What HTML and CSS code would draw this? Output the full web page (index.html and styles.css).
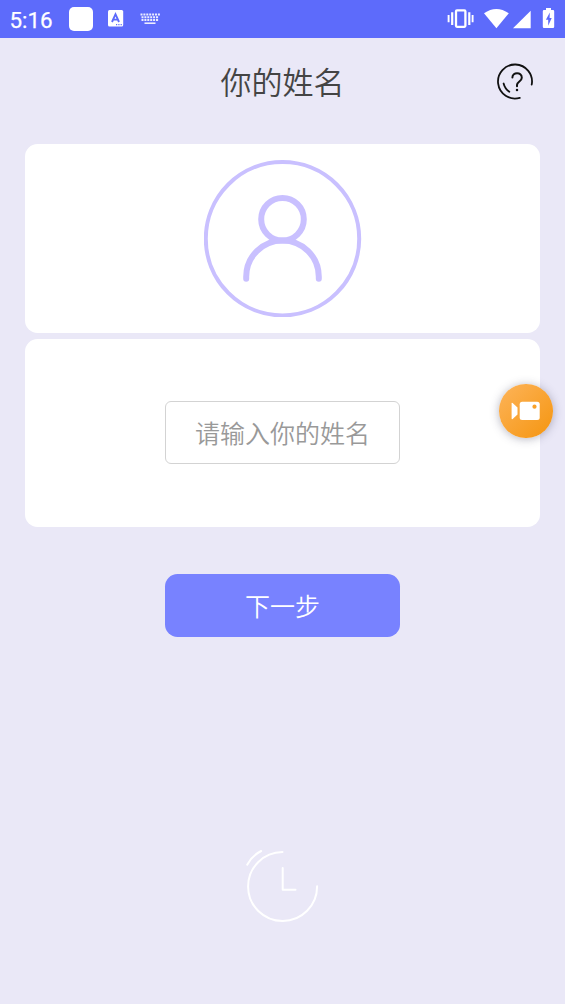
FILE: index.html
```html
<!DOCTYPE html>
<html lang="zh-CN">
<head>
<meta charset="utf-8">
<meta name="viewport" content="width=device-width, initial-scale=1">
<title>你的姓名</title>
<link rel="stylesheet" href="styles.css">
</head>
<body>
<div class="screen">
  <div class="status">
    <span class="time">5:16</span>
    <span class="app-dot"></span>
    <svg class="ic-a" width="16" height="17" viewBox="0 0 16 17">
      <rect width="15.2" height="16.6" rx="1.5" fill="#fff"/>
      <path d="M4 12L7.5 4.2L11 12M5.2 9.6H9.8" fill="none" stroke="#5d6bfb" stroke-width="1.9"/>
      <path d="M8 14.7h1.2M10.3 14.7h1.2M12.6 14.7h1.2" stroke="#5d6bfb" stroke-width="1.3"/>
    </svg>
    <svg class="ic-kb" width="20" height="12" viewBox="0 0 20 12">
      <g stroke="#fff" stroke-opacity=".88" stroke-width="2" fill="none">
        <path d="M.5 1.4H20" stroke-dasharray="2 .9"/>
        <path d="M1.5 4.2H19" stroke-dasharray="2 .9"/>
        <path d="M1.5 7H19" stroke-dasharray="2 .9"/>
        <path d="M4.5 10.2H15.5" stroke-width="1.6"/>
      </g>
    </svg>
    <span class="spacer"></span>
    <svg width="118" height="38" viewBox="447 0 118 38">
      <g fill="none" stroke="#fff">
        <rect x="456" y="10.4" width="9.4" height="16.4" rx="1" stroke-width="2.3"/>
        <path d="M452.2 12.2V25M469.3 12.2V25" stroke-width="2.2"/>
        <path d="M448.6 15V22.2M472.6 15V22.2" stroke-width="1.9"/>
      </g>
      <g fill="#fff">
        <path d="M484 13.3Q496.3 4.6 508.8 13.3L496.4 28.2Z"/>
        <path d="M530.7 10.8V28.2H513Z"/>
        <path d="M546 10V8h5v2h2q1.2 0 1.2 1.2v15.6q0 1.2-1.2 1.2h-9q-1.2 0-1.2-1.2V11.2q0-1.2 1.2-1.2Z"/>
      </g>
      <path d="M549.8 12.5L545.9 19.8H548.2V25.8L551.7 18H549.6Z" fill="#5d6bfb"/>
    </svg>
  </div>

  <header class="header">
    <h1 class="title">你的姓名</h1>
    <svg class="help" width="40" height="40" viewBox="495 61.8 40 40">
      <g fill="none" stroke="#111" stroke-width="1.8" stroke-linecap="round">
        <path d="M531.7 84.5A17 17 0 1 0 519.8 97.6"/>
        <path d="M503.6 83.3A14 14 0 0 0 509.3 91.5"/>
        <path d="M512.4 77.3C512.4 71.6 521.8 71.6 521.8 77.5C521.8 81.2 517 81.3 517 84.8V86" stroke-width="2"/>
      </g>
      <circle cx="517" cy="89.7" r="1.25" fill="#111"/>
    </svg>
  </header>

  <main class="main">
    <section class="card">
      <svg width="158" height="158" viewBox="0.5 -0.7 158 158">
        <g fill="none" stroke="#c9c0ff">
          <circle cx="79" cy="79" r="76.7" stroke-width="4"/>
          <circle cx="79" cy="59.6" r="21.3" stroke-width="6"/>
          <path d="M42.7 119V117A36.3 36.3 0 0 1 115.3 117V119" stroke-width="6" stroke-linecap="round"/>
        </g>
      </svg>
    </section>
    <section class="card">
      <input class="name" type="text" placeholder="请输入你的姓名" aria-label="请输入你的姓名">
    </section>
    <button class="next" type="button">下一步</button>
    <svg class="clock" width="80" height="80" viewBox="243 846 80 80">
      <g fill="none" stroke="#fff" stroke-width="2" stroke-linecap="round">
        <path d="M282.5 852A34.5 34.5 0 1 0 317.1 886.3"/>
        <path d="M247.2 864.7Q252 855.6 261.2 851"/>
        <path d="M282.7 868V889.8H295.5" stroke-linejoin="round"/>
      </g>
    </svg>
  </main>

  <div class="record">
    <svg width="30" height="20" viewBox="0 0 30 20">
      <path d="M.6 2.5Q.6 1.2 1.6 2L6.5 6.4V13.4L1.6 17.9Q.6 18.7.6 17.3Z" fill="#fff"/>
      <rect x="8.7" y=".7" width="20" height="18.3" rx="2.5" fill="#fff"/>
      <circle cx="23.5" cy="5.7" r="2.1" fill="#f9a12a"/>
    </svg>
  </div>
</div>
</body>
</html>
```
FILE: styles.css
```css
* { box-sizing: border-box; }

body {
  margin: 0;
  font-family: "Noto Sans CJK SC", sans-serif;
}

.screen {
  position: relative;
  height: 1004px;
  overflow: hidden;
  background: #eae8f7;
}

.status {
  display: flex;
  align-items: center;
  height: 37.7px;
  padding-left: 9.5px;
  background: #5d6bfb;
  color: #fff;
}

.time {
  width: 59.5px;
  font: 400 22.4px/38px Roboto, sans-serif;
  padding-top: 2px;
  -webkit-text-stroke: .25px #fff;
}

.app-dot {
  width: 24px;
  height: 24px;
  border-radius: 5px;
  background: #fff;
}

.ic-a { margin-left: 15px; }
.ic-kb { margin-left: 16px; }
.spacer { flex: 1; }

.header {
  display: grid;
  grid-template-columns: 70px 1fr 70px;
  align-items: center;
  height: 88.3px;
}

.title {
  grid-column: 2;
  margin: 0;
  padding-bottom: 1px;
  color: #444;
  font-size: 31px;
  font-weight: 350;
  line-height: 46px;
  text-align: center;
}

.help { display: block; }

.main {
  display: flex;
  flex-direction: column;
  align-items: center;
  padding: 18.3px 25px 0;
}

.card {
  display: flex;
  align-items: center;
  justify-content: center;
  width: 100%;
  height: 188.4px;
  margin-bottom: 6.2px;
  border-radius: 12.5px;
  background: #fff;
}

.name {
  width: 235px;
  height: 63px;
  margin-bottom: 1px;
  padding: 0 0 1px;
  border: 1px solid #d3d3d3;
  border-radius: 6px;
  background: #fff;
  color: #444;
  font: 350 25px "Noto Sans CJK SC", sans-serif;
  text-align: center;
  outline: none;
}

.name::placeholder { color: #999; opacity: 1; }

.next {
  width: 235.5px;
  height: 63px;
  margin-top: 40.6px;
  padding: 0 0 2px;
  border: 0;
  border-radius: 12.5px;
  background: #7882ff;
  color: #fff;
  font: 350 25px "Noto Sans CJK SC", sans-serif;
}

.clock { margin-top: 209px; }

.record {
  position: absolute;
  top: 384.3px;
  left: 499px;
  display: flex;
  align-items: center;
  justify-content: center;
  width: 53.5px;
  height: 53.5px;
  border-radius: 50%;
  background: linear-gradient(135deg, #fdb45a, #f5950f);
  box-shadow: 0 1px 10px rgba(60, 60, 90, .38);
}
```
